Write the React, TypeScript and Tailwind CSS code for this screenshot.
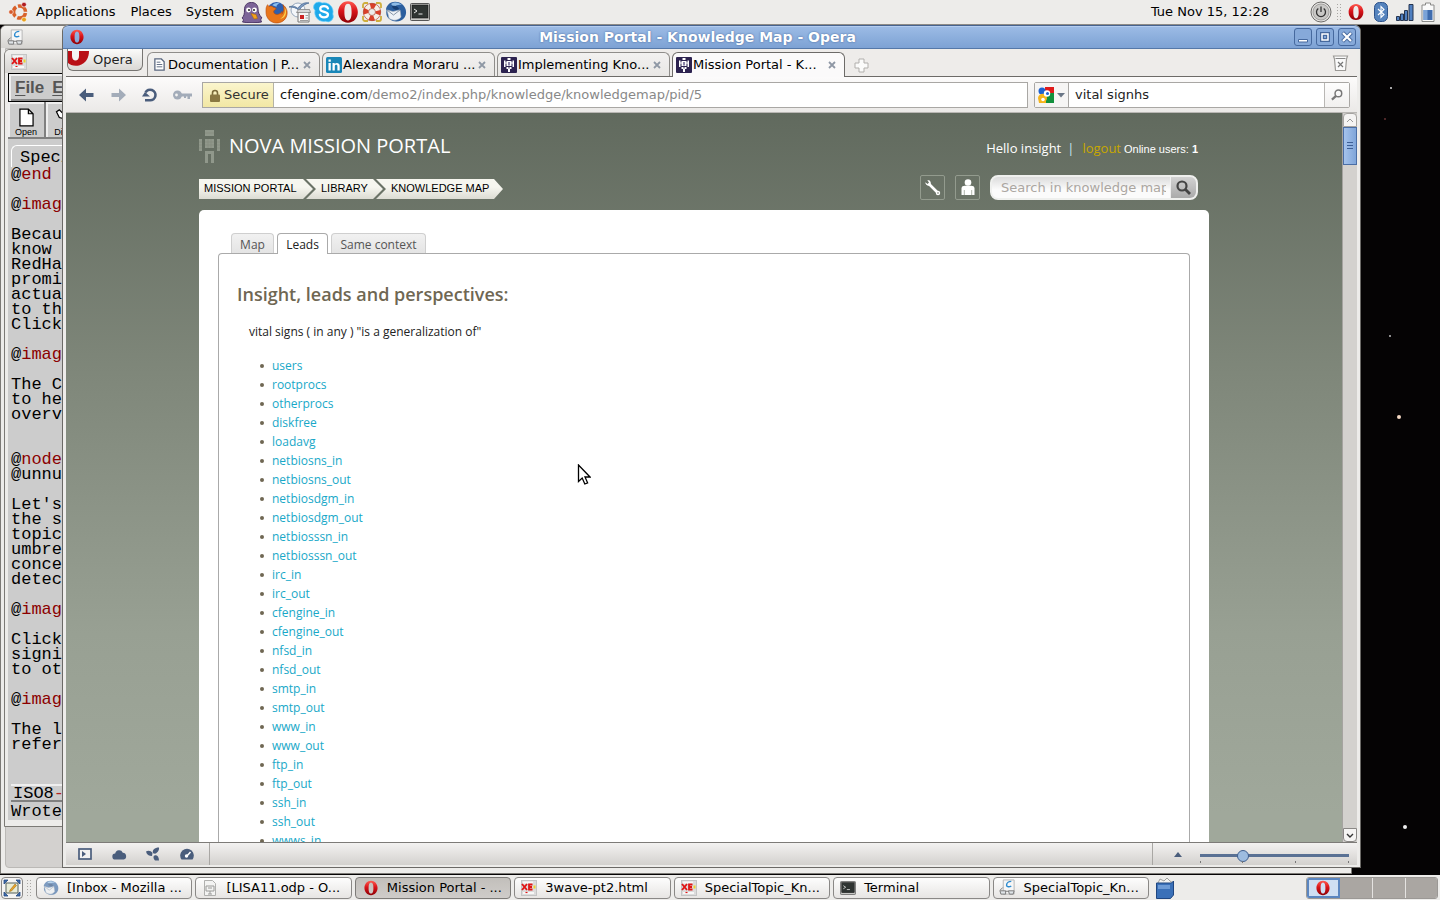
import React from "react";

type IconProps = { className?: string };

function OperaO({ className = "size-5" }: IconProps) {
  return (
    <svg viewBox="0 0 20 20" className={className} aria-hidden="true">
      <defs>
        <linearGradient id="operaRed" x1="0" y1="0" x2="0" y2="1">
          <stop offset="0" stopColor="#ff5a50" />
          <stop offset="0.45" stopColor="#d8141a" />
          <stop offset="1" stopColor="#8e0005" />
        </linearGradient>
      </defs>
      <path
        fillRule="evenodd"
        fill="url(#operaRed)"
        d="M10 1C5.300 1 1.800 5 1.800 10.100S5.300 19 10 19s8.200-3.800 8.200-8.900S14.700 1 10 1zm0 2.200c2.300 0 3 2.800 3 6.800S12.300 17 10 17s-3-3-3-7S7.700 3.200 10 3.200z"
      />
    </svg>
  );
}

function Ubuntu() {
  return (
    <svg viewBox="0 0 22 22" className="size-[22px]" aria-hidden="true">
      <circle cx="11.500" cy="11" r="6" fill="none" stroke="#d8612a" strokeWidth="3.600" strokeDasharray="10.500 2" strokeDashoffset="-1" />
      <circle cx="3" cy="11" r="2.300" fill="#d5592b" stroke="#fff" strokeWidth=".6" />
      <circle cx="16" cy="3.600" r="2.400" fill="#b01d22" stroke="#fff" strokeWidth=".6" />
      <circle cx="16" cy="18.600" r="2.400" fill="#e9a21d" stroke="#fff" strokeWidth=".6" />
    </svg>
  );
}

function Pidgin() {
  return (
    <svg viewBox="0 0 22 22" className="size-[22px]" aria-hidden="true">
      <path d="M3.500 9C3.500 4 6 1.500 10.500 1.500c4 0 6.500 2.500 6.500 6.500 0 3 .8 5.500 4 9-1.500.3-1.500 1.500-.5 4-5 1-14 1-19 0 1.500-2 1-3-.5-4 2-2 2.500-4 2.500-8z" fill="#7c6498" stroke="#4b3565" strokeWidth="1" />
      <circle cx="7.500" cy="9" r="2.400" fill="#fff" />
      <circle cx="13.500" cy="9" r="2.400" fill="#fff" />
      <circle cx="8" cy="9" r="1" fill="#222" />
      <circle cx="13" cy="9" r="1" fill="#222" />
      <path d="M10 12.500l5 1 1.500 4-3.500.5z" fill="#f3a21c" stroke="#a76207" strokeWidth=".5" />
    </svg>
  );
}

function Firefox() {
  return (
    <svg viewBox="0 0 22 22" className="size-[23px]" aria-hidden="true">
      <circle cx="11" cy="10" r="9" fill="#2f5fae" />
      <path d="M7 4c2-2 5-2.500 7-1.500-2 .5-3 1.500-3 3z" fill="#8cc0f0" />
      <path d="M1 8c0-2 .8-3.500 1.500-4.500.3 1 .8 1.500 1.500 1.700C5.500 4.500 7 5 8 6c1.500.3 2.500.8 2.800 1.700-1.300.8-2.800 1.300-2.500 2.800.3 2 3 3 5 2 1.500-.7 2.500-1 3-2.500.5 1 0 2-.5 2.700C18.500 10 18.500 6 17 3.500 20.500 6 22 10 20.800 14 19.500 18.500 15.500 21 11 21 5 21 1 16 1 11z" fill="#e8761b" stroke="#b94a08" strokeWidth=".6" />
      <path d="M18.500 6c1.500 4 0 9-4 11 4-.2 6-4 5.500-7.500-.2-1.500-.8-2.700-1.500-3.500z" fill="#fbd14b" />
    </svg>
  );
}

function OfficeDoc() {
  return (
    <svg viewBox="0 0 22 22" className="size-[22px]" aria-hidden="true">
      <circle cx="9" cy="9" r="7" fill="#f3f6fa" stroke="#98a9bd" />
      <path d="M0 6c3-1.500 6-1 9 1.500C11 3.500 15 1 20 2c-4 1-7 3-10 7.500C7 6.500 4 6 0 6z" fill="#7f9cc2" stroke="#41628d" strokeWidth=".7" />
      <path d="M9 10.500h11V21H9z" fill="#f5f5f5" stroke="#777" />
      <path d="M7.500 11.500l2-3h11l1 3z" fill="#d7d7d7" stroke="#777" strokeWidth=".7" />
      <path d="M11 14h4v4h-4z" fill="#c22" />
      <path d="M16.500 14.500h2.500M16.500 17h2.500M11 19.500h8" stroke="#888" strokeWidth=".8" />
    </svg>
  );
}

function Skype() {
  return (
    <svg viewBox="0 0 22 22" className="size-[22px]" aria-hidden="true">
      <path d="M6 1a5 5 0 0 1 3 1 9 9 0 0 1 10.800 11A5.500 5.500 0 0 1 12.500 20.300 9 9 0 0 1 2 9.500 5 5 0 0 1 6 1z" fill="#1ea9ea" stroke="#6fd0fa" strokeWidth=".7" />
      <path d="M15 7.500C14.500 5.800 13 5.200 11 5.200c-2.200 0-3.800 1-3.800 2.800 0 3.800 7.800 2 7.800 5.500 0 1.900-1.800 2.800-4 2.800s-3.700-.8-4.200-2.600" fill="none" stroke="#fff" strokeWidth="2.200" strokeLinecap="round" />
    </svg>
  );
}

function Lifebuoy() {
  return (
    <svg viewBox="0 0 22 22" className="size-[22px]" aria-hidden="true">
      <path d="M7 2H4a2 2 0 0 0-2 2v3M15 2h3a2 2 0 0 1 2 2v3M7 20H4a2 2 0 0 1-2-2v-3M15 20h3a2 2 0 0 0 2-2v-3" fill="none" stroke="#cfae3c" strokeWidth="1.800" />
      <circle cx="11" cy="11" r="6.200" fill="none" stroke="#f5efe8" strokeWidth="5" />
      <circle cx="11" cy="11" r="6.200" fill="none" stroke="#d9402a" strokeWidth="5" strokeDasharray="4.870 4.870" strokeDashoffset="2.430" />
      <circle cx="11" cy="11" r="8.700" fill="none" stroke="#a8301a" strokeWidth=".6" />
      <circle cx="11" cy="11" r="3.500" fill="none" stroke="#a8301a" strokeWidth=".6" />
    </svg>
  );
}

function Thunderbird({ className = "size-[22px]" }: IconProps) {
  return (
    <svg viewBox="0 0 22 22" className={className} aria-hidden="true">
      <path d="M3 4c3-4 10-4 14-1 4 3 5.500 9 2.500 13.500C16.500 21 9 21.500 5 18.500 1 16 1 12 1.500 9.500 .5 8 1.500 5.500 3 4z" fill="#2c5f9e" />
      <path d="M6 3c4-2.500 8-1.500 11 1-3-.5-6 0-8 2z" fill="#8dbbe6" />
      <path d="M2 9l6 1.500 7-1.500 1 7c-3 4-9 4-12 1z" fill="#eef2f6" stroke="#a7b3c0" strokeWidth=".6" />
      <path d="M2 9l6.500 5L15 9" fill="none" stroke="#8796a8" />
      <path d="M7 5c3-1 6 0 7 3l-3 1c-2-1-4-2-4-4z" fill="#183f73" />
    </svg>
  );
}

function TerminalIcon({ className = "h-[18px] w-5" }: IconProps) {
  return (
    <svg viewBox="0 0 20 18" className={className} aria-hidden="true">
      <rect x=".5" y=".5" width="19" height="17" rx="1" fill="#c9c9c6" stroke="#555" />
      <rect x="2" y="2" width="16" height="13" fill="#2f3432" stroke="#111" strokeWidth=".6" />
      <path d="M4 6l3 2-3 2M8.500 11h4" fill="none" stroke="#e6e6e6" />
    </svg>
  );
}

function XeIcon() {
  return (
    <svg viewBox="0 0 16 16" className="size-4 shrink-0" aria-hidden="true">
      <rect x=".5" y=".5" width="15" height="15" fill="#dcdcdc" stroke="#c4c4c4" />
      <path d="M2 1.500h10v2H2zM2 12h11v2H2z" fill="#f7f7f7" />
      <path d="M1 4l5 6M6 4l-5 6" stroke="#e01515" strokeWidth="1.900" />
      <path d="M11.500 4.500H8v5h3.500M8 7h3" fill="none" stroke="#e01515" strokeWidth="1.800" />
      <path d="M12.500 5.500h2v3h-2z" fill="#ead32c" />
      <path d="M4.500 12.500h2" stroke="#e01515" strokeWidth="1.200" />
    </svg>
  );
}

function GlassesDoc() {
  return (
    <svg viewBox="0 0 18 18" className="size-[17px] shrink-0" aria-hidden="true">
      <path d="M4.500 1H16v15H4.500z" fill="#f6f6f6" stroke="#b5b5b5" />
      <path d="M13 2.500c-3 0-5 2-5 4s3 2 5 1" fill="none" stroke="#2c8bd0" strokeWidth="1.500" />
      <path d="M1 12.500h6v3.500H2zM10 12.500h6l-1 3.500h-4zM7 13h3M1 12l3-3" fill="#dfe4e8" stroke="#777" />
    </svg>
  );
}

function SlidesDoc() {
  return (
    <svg viewBox="0 0 16 16" className="size-4 shrink-0" aria-hidden="true">
      <path d="M2.500.5h8l3 3v12h-11z" fill="#f3f3f2" stroke="#b0b0ae" />
      <path d="M4 6h8v5H4zM6 8h4M8 11v3M6 14h4" fill="none" stroke="#9a9a98" />
    </svg>
  );
}

function RobotFav() {
  return (
    <svg viewBox="0 0 16 16" className="size-4 shrink-0" aria-hidden="true">
      <rect width="16" height="16" rx="1" fill="#2d2350" />
      <path d="M6.500 1h3v2h-3zM5.500 4h5v5h-5zM3 3.500h1.500V10H3zM11.500 3.500H13V10h-1.500zM4 5.500h8v1H4zM5.500 10h2v2h-2zM8.500 10h2v2h-2zM7 11.500h2V15H7z" fill="#fff" />
      <path d="M7 5h2v3.500H7z" fill="#8b84a8" />
    </svg>
  );
}

function LinkedInFav() {
  return (
    <svg viewBox="0 0 16 16" className="size-4 shrink-0" aria-hidden="true">
      <rect width="16" height="16" rx="1.500" fill="#1a87b8" />
      <path d="M2.500 6h2.300v7.500H2.500zM2.500 2.500h2.300v2.200H2.500zM6.500 6h2.200v1c1.200-1.800 5-1.500 5 1.800v4.700h-2.300V9.300c0-2-2.600-1.800-2.600 0v4.200H6.500z" fill="#fff" />
    </svg>
  );
}

function PageFav() {
  return (
    <svg viewBox="0 0 14 14" className="size-[13px] shrink-0" aria-hidden="true">
      <path d="M2 1h7l3 3v9H2z" fill="#fff" stroke="#5b6880" strokeWidth="1.400" />
      <path d="M4 4.500h4M4 7h6M4 9.500h6" stroke="#5b6880" />
    </svg>
  );
}

function Grip() {
  return (
    <span className="grid grid-cols-2 gap-x-[2px] gap-y-[2px]" aria-hidden="true">
      {Array.from({ length: 12 }, (_, i) => (
        <span key={i} className="size-px bg-[#a9a7a4]" />
      ))}
    </span>
  );
}

const launchers: { name: string; icon: React.ReactNode }[] = [
  { name: "Pidgin", icon: <Pidgin /> },
  { name: "Firefox", icon: <Firefox /> },
  { name: "Evolution", icon: <OfficeDoc /> },
  { name: "Skype", icon: <Skype /> },
  { name: "Opera", icon: <OperaO className="size-6" /> },
  { name: "Help", icon: <Lifebuoy /> },
  { name: "Thunderbird", icon: <Thunderbird /> },
  { name: "Terminal", icon: <TerminalIcon /> },
];

function TopPanel() {
  return (
    <header className="flex h-[25px] shrink-0 items-center border-b border-[#8d8b87] bg-[#edecea] text-[13px] leading-4 text-black">
      <nav className="flex items-center pl-2" aria-label="System menu">
        <Ubuntu />
        <button className="ml-[6px]">Applications</button>
        <button className="ml-[15px]">Places</button>
        <button className="ml-[14px]">System</button>
      </nav>
      <div className="ml-[6px] flex items-center">
        {launchers.map((l) => (
          <button key={l.name} aria-label={l.name} className="flex w-6 items-center justify-center">
            {l.icon}
          </button>
        ))}
      </div>
      <div className="ml-auto flex items-center">
        <time className="mr-[41px]">Tue Nov 15, 12:28</time>
        <button aria-label="Power" className="mr-[5px]">
          <svg viewBox="0 0 22 22" className="size-[22px]">
            <circle cx="11" cy="11" r="10" fill="#e4e3e1" stroke="#6c6b69" />
            <circle cx="11" cy="11" r="8" fill="#c9c8c6" stroke="#a3a2a0" />
            <path d="M8.300 7.500a4.500 4.500 0 1 0 5.400 0M11 5.500V11" fill="none" stroke="#333" strokeWidth="1.300" />
          </svg>
        </button>
        <Grip />
        <button aria-label="Opera tray" className="ml-[6px]">
          <OperaO className="size-[18px]" />
        </button>
        <button aria-label="Bluetooth" className="ml-2">
          <svg viewBox="0 0 16 20" className="h-5 w-4">
            <rect x="1.500" y=".5" width="13" height="19" rx="5" fill="#5583bd" stroke="#2d528a" />
            <path d="M5 7l6 5.500L8 15.500v-11l3 3L5 13" fill="none" stroke="#fff" strokeWidth="1.100" />
          </svg>
        </button>
        <button aria-label="Network" className="ml-[7px]">
          <svg viewBox="0 0 18 18" className="size-[18px]">
            <path d="M.5 13.500h3v4h-3zM4.500 11h3v6.500h-3zM8.500 7.500h3v10h-3zM13 1.500h4v16h-4z" fill="#4f7fc0" stroke="#26354f" />
          </svg>
        </button>
        <button aria-label="Battery" className="mr-[5px] ml-[7px]">
          <svg viewBox="0 0 14 20" className="h-5 w-[14px]">
            <path d="M4.500 1h5v2h3.500v16.500H1V3h3.500z" fill="#fafafa" stroke="#8a8a88" />
            <path d="M2.500 8h9v10h-9z" fill="#3f6cae" />
            <path d="M2.500 8h4v10h-4z" fill="#7ba3d8" />
          </svg>
        </button>
      </div>
    </header>
  );
}

const emacsText: { at?: boolean; text: string }[] = [
  { at: true, text: "end" }, { text: "" },
  { at: true, text: "image" }, { text: "" },
  { text: "Becaus" }, { text: "know t" }, { text: "RedHat" }, { text: "promis" }, { text: "actual" }, { text: "to the" }, { text: "Click " }, { text: "" },
  { at: true, text: "image" }, { text: "" },
  { text: "The CF" }, { text: "to hel" }, { text: "overvi" }, { text: "" }, { text: "" },
  { at: true, text: "node" }, { text: "@unnum" }, { text: "" },
  { text: "Let's " }, { text: "the sy" }, { text: "topics" }, { text: "umbrel" }, { text: "concep" }, { text: "detect" }, { text: "" },
  { at: true, text: "image" }, { text: "" },
  { text: "Clicki" }, { text: "signif" }, { text: "to oth" }, { text: "" },
  { at: true, text: "image" }, { text: "" },
  { text: "The le" }, { text: "refere" },
];

function EmacsWindow() {
  return (
    <section aria-label="Editor" className="absolute top-[24px] bottom-12 left-1 w-[200px] overflow-hidden rounded-tl-md border border-[#7c7a76] bg-[#edecea]">
      <div className="flex h-[23px] items-center bg-[linear-gradient(#f2f1ef,#d6d4d1)] pl-[6px]">
        <XeIcon />
      </div>
      <div className="mr-1 ml-[3px] bg-[#cccccc]">
        <div className="flex h-[29px] items-center gap-2 border border-black bg-[#cccccc] pt-px pl-[6px] font-['Liberation_Sans'] text-[17px] leading-5 font-bold text-[#555] shadow-[inset_2px_2px_0_#eee,inset_-1px_-2px_0_#888]">
          <button><span className="underline underline-offset-2">F</span>ile</button>
          <button><span className="underline underline-offset-2">E</span>dit</button>
        </div>
        <div className="flex h-[37px] border-b-2 border-[#808080]">
          <button className="flex w-[38px] flex-col items-center justify-end border-r-2 border-[#808080] font-['Liberation_Sans'] text-[9px] leading-[10px] text-black shadow-[inset_2px_2px_0_#eee]">
            <svg viewBox="0 0 16 20" className="h-[19px] w-[15px]" aria-hidden="true">
              <path d="M1 1h9l5 5v13H1zM10 1v5h5" fill="#fff" stroke="#000" strokeWidth="1.300" />
            </svg>
            Open
          </button>
          <button className="flex w-[38px] flex-col items-center justify-end font-['Liberation_Sans'] text-[9px] leading-[10px] text-black shadow-[inset_2px_2px_0_#eee]">
            <svg viewBox="0 0 22 20" className="h-[19px] w-[22px]" aria-hidden="true">
              <path d="M2 4l3-2 3 3 3-3h9l-5 15h-4l-2-6-4-1z" fill="#fff" stroke="#000" strokeWidth="1.300" />
            </svg>
            Dired
          </button>
        </div>
        <div className="px-[3px] pt-[6px] font-['Liberation_Mono',monospace] text-[17px] leading-[15px] whitespace-pre text-black">
          <div className="h-[22px] rounded-tl-md border-t border-l border-white pt-[4px] pl-[8px]">Special</div>
          {emacsText.map((l, i) => (
            <div key={i} className="h-[15px]">
              {l.at && "@"}
              <span className={l.at ? "text-[#8b0000]" : ""}>{l.text}</span>
            </div>
          ))}
          <div className="mt-[32px] flex h-[18px] items-center border-t-2 border-b-2 border-t-[#eee] border-b-[#808080] pl-[2px]">
            ISO8<span className="text-[#b22222]">--</span>
          </div>
          <div className="h-[18px] pt-[2px]">Wrote </div>
        </div>
      </div>
    </section>
  );
}

const tabs = [
  { title: "Documentation | P...", icon: <PageFav /> },
  { title: "Alexandra Moraru ...", icon: <LinkedInFav /> },
  { title: "Implementing Kno...", icon: <RobotFav /> },
  { title: "Mission Portal - K...", icon: <RobotFav />, active: true },
];

function TitleBar() {
  return (
    <div className="flex h-6 shrink-0 items-center rounded-t-md border-t border-b border-t-[#46638f] border-b-[#5578a8] bg-[linear-gradient(#9dbce6,#7da2d4)] pr-1 pl-[6px] shadow-[inset_0_1px_0_#b4cdf0]">
      <OperaO className="size-4" />
      <h1 className="flex-1 pl-4 text-center text-[14px] leading-4 font-bold text-white [text-shadow:0_0_2px_#3f5f94]">
        Mission Portal - Knowledge Map - Opera
      </h1>
      <div className="flex gap-1">
        <button aria-label="Minimize" className="rounded-[3px] border border-[#46699e] bg-[#86a9d9]">
          <svg viewBox="0 0 16 16" className="size-4"><path d="M3.500 10.500h9v2.500h-9z" fill="#fff" stroke="#46699e" /></svg>
        </button>
        <button aria-label="Maximize" className="rounded-[3px] border border-[#46699e] bg-[#86a9d9]">
          <svg viewBox="0 0 16 16" className="size-4"><path d="M5 5h6v6H5z" fill="none" stroke="#46699e" strokeWidth="4" /><path d="M5 5h6v6H5z" fill="none" stroke="#fff" strokeWidth="1.500" /></svg>
        </button>
        <button aria-label="Close" className="rounded-[3px] border border-[#46699e] bg-[#86a9d9]">
          <svg viewBox="0 0 16 16" className="size-4"><path d="M5 5l6 6M11 5l-6 6" stroke="#46699e" strokeWidth="4" strokeLinecap="square" /><path d="M4 4l8 8M12 4l-8 8" stroke="#fff" strokeWidth="2.200" /></svg>
        </button>
      </div>
    </div>
  );
}

function TabBar() {
  return (
    <div className="flex h-7 shrink-0 items-start bg-[#eeecea] text-[13px] leading-4 shadow-[inset_0_-1px_0_#6d6b68]">
      <button className="ml-px flex h-[22px] w-[76px] items-start gap-1 rounded-b-md border border-t-0 border-[#777572] bg-[linear-gradient(#fbfbfa,#dad8d5)] pt-[2px] text-[#222]">
        <svg viewBox="0 0 21 15" className="h-[15px] w-[21px]" aria-hidden="true">
          <path d="M0 0h21c0 7-3 12-10 14.500C6 15.500 2 14 0 12z" fill="#b90f16" />
          <path d="M4 0h7v5c0 6-7 6-7 0z" fill="#f4f3f2" />
        </svg>
        <span className="pt-px">Opera</span>
      </button>
      <div role="tablist" className="ml-1 flex gap-[2px] pt-[3px]">
        {tabs.map((t) => (
          <div
            key={t.title}
            className={
              t.active
                ? "flex h-[25px] w-[173px] items-center rounded-t-md border border-b-0 border-[#6d6b68] bg-[#fbfafa] pr-2 pl-[3px]"
                : "mb-px flex h-6 w-[173px] items-center rounded-t-md border border-b-0 border-[#8f8d8a] bg-[linear-gradient(#f2f1f0,#e9e7e5)] pr-2 pl-[3px]"
            }
          >
            <button role="tab" aria-selected={!!t.active} className="flex min-w-0 flex-1 items-center gap-px whitespace-nowrap text-black">
              <span className="flex w-4 justify-center">{t.icon}</span>
              {t.title}
            </button>
            <button aria-label={"Close " + t.title}>
              <svg viewBox="0 0 8 8" className="size-2"><path d="M1 1l6 6M7 1L1 7" stroke="#8f98a5" strokeWidth="1.800" /></svg>
            </button>
          </div>
        ))}
      </div>
      <button aria-label="New tab" className="mt-[9px] ml-[9px]">
        <svg viewBox="0 0 15 15" className="size-[15px]"><path d="M5 1h5v4h4v5h-4v4H5v-4H1V5h4z" fill="#fbfbfa" stroke="#b1afac" /></svg>
      </button>
      <button aria-label="Closed tabs" className="mt-[6px] mr-2 ml-auto">
        <svg viewBox="0 0 17 17" className="size-[17px]">
          <path d="M1.500 1h14l-1 3-1 11.500h-10L2.500 4z" fill="#fafafa" stroke="#9b9996" strokeWidth="1.200" />
          <path d="M3.500 3.500h10" stroke="#888" />
          <path d="M6 7l5 5M11 7l-5 5" stroke="#777" strokeWidth="1.200" />
        </svg>
      </button>
    </div>
  );
}

function AddressBar() {
  return (
    <div className="flex h-9 shrink-0 items-center border-b border-[#b9b7b4] bg-[linear-gradient(#fcfbfb,#ebe9e7)] pt-px pr-[7px] text-[13px] leading-4">
      <button aria-label="Back" className="ml-[13px]">
        <svg viewBox="0 0 15 14" className="h-[14px] w-[15px]"><path d="M0 7l7-6.500V5h7.500v4H7v4.500z" fill="#4a5d7c" /></svg>
      </button>
      <button aria-label="Forward" className="ml-[17px]">
        <svg viewBox="0 0 15 14" className="h-[14px] w-[15px]"><path d="M15 7L8 .5V5H.5v4H8v4.500z" fill="#a3acb9" /></svg>
      </button>
      <button aria-label="Reload" className="ml-4">
        <svg viewBox="0 0 16 16" className="size-4"><path d="M3.500 5.500A5.300 5.300 0 1 1 8 13.300H3" fill="none" stroke="#4a5d7c" strokeWidth="2.600" /><path d="M0 9.500l3-4.500 5 4.500z" fill="#4a5d7c" /></svg>
      </button>
      <button aria-label="Password manager" className="ml-[15px]">
        <svg viewBox="0 0 19 10" className="h-[10px] w-[19px]"><circle cx="4.500" cy="5" r="4.500" fill="#a3acb9" /><circle cx="3.500" cy="5" r="1.400" fill="#f4f3f2" /><path d="M8 3.500h11v3h-2V9h-2.500V6.500H13V8h-2V6.500H8z" fill="#a3acb9" /></svg>
      </button>
      <div className="ml-[10px] flex h-[26px] flex-1 items-stretch border border-[#a9a7a4] bg-white">
        <button className="flex w-[71px] items-center gap-1 border-r border-[#b5b3a5] bg-[linear-gradient(#fbf5cd,#f2e7a4)] pl-[7px] text-[#333]">
          <svg viewBox="0 0 10 13" className="h-[13px] w-[10px]" aria-hidden="true"><path d="M2.500 6V4a2.500 2.500 0 0 1 5 0v2" fill="none" stroke="#7a6a3a" strokeWidth="1.600" /><rect y="5.500" width="10" height="7.500" rx="1" fill="#8a7842" /></svg>
          Secure
        </button>
        <a href="#address" className="flex items-center pl-[6px] text-[#888]">
          <span><span className="text-[#111]">cfengine.com</span>/demo2/index.php/knowledge/knowledgemap/pid/5</span>
        </a>
      </div>
      <div className="ml-[6px] flex h-[26px] w-[316px] items-stretch rounded-[2px] border border-[#a9a7a4] bg-white">
        <button aria-label="Search engine" className="flex w-[34px] items-center gap-[3px] border-r border-[#a9a7a4] bg-[#f6f5f4] pl-[3px]">
          <svg viewBox="0 0 16 16" className="size-4"><path d="M0 0h7v16H0z" fill="#f5f5f5" /><path d="M7 0h9v6H7z" fill="#e01b1b" /><path d="M9 6h7v10H7z" fill="#12903c" /><circle cx="4" cy="4" r="3.500" fill="#1f62d0" /><path d="M0 11a4.500 4.500 0 1 1 8 3v2H1z" fill="#f6b51c" /><circle cx="9" cy="6.500" r="3.200" fill="#fff" /><circle cx="9.500" cy="6.500" r="1.500" fill="#1f62d0" /><circle cx="5" cy="12.500" r="1.800" fill="#fff" /></svg>
          <svg viewBox="0 0 8 5" className="h-[5px] w-2"><path d="M0 0h8L4 4.500z" fill="#6a7686" /></svg>
        </button>
        <input aria-label="Web search" defaultValue="vital signhs" className="min-w-0 flex-1 px-[6px] text-[#222] outline-none" />
        <button aria-label="Search" className="flex w-[25px] items-center justify-center border-l border-[#b9b7b4] bg-[linear-gradient(#fdfdfd,#f1f0ef)]">
          <svg viewBox="0 0 13 13" className="size-[12px]"><circle cx="8" cy="4.800" r="3.600" fill="none" stroke="#777" strokeWidth="1.600" /><path d="M5.500 7.500L1 11.500" stroke="#777" strokeWidth="2.400" /></svg>
        </button>
      </div>
    </div>
  );
}

const leads = [
  "users", "rootprocs", "otherprocs", "diskfree", "loadavg", "netbiosns_in", "netbiosns_out", "netbiosdgm_in", "netbiosdgm_out",
  "netbiosssn_in", "netbiosssn_out", "irc_in", "irc_out", "cfengine_in", "cfengine_out", "nfsd_in", "nfsd_out", "smtp_in", "smtp_out",
  "www_in", "www_out", "ftp_in", "ftp_out", "ssh_in", "ssh_out", "wwws_in",
];

function Portal() {
  return (
    <main className="min-w-0 flex-1 overflow-hidden bg-[linear-gradient(#616a5e,#7f877a_260px,#98a093_520px,#a0a89b_700px)] font-['Open_Sans',sans-serif]">
      <div className="mx-auto max-w-[1010px]">
        <div className="flex h-[66px] items-center justify-between pr-[11px]">
          <div className="flex items-center gap-[9px]">
            <svg viewBox="0 0 21 33" className="h-[33px] w-[21px]" aria-hidden="true">
              <path d="M6 0h9v6H6zM6 9h9v9H6zM0 9h3v12H0zM18 9h3v12h-3zM6 21h9v12h-3v-9H9v9H6z" fill="#90988b" />
              <path d="M6 3h9M6 12h9M6 15h9M0 12h3M0 15h3M0 18h3M18 12h3M18 15h3M18 18h3M9 9v9M12 9v9" stroke="#838b7e" strokeWidth=".6" />
            </svg>
            <h2 className="text-[20px] leading-7 text-white">NOVA MISSION PORTAL</h2>
          </div>
          <p className="flex items-baseline pt-[5px] text-[13px] leading-5 text-white">
            Hello insight<span className="mr-2 ml-[6px] text-[#c9e4f4]">|</span>
            <a href="#logout" className="text-[#c8a800]">logout</a>
            <span className="ml-[3px] font-['Liberation_Sans'] text-[11px]">Online users: <b>1</b></span>
          </p>
        </div>
        <div className="flex h-[31px] items-start">
          <nav aria-label="Breadcrumb" className="flex font-['Liberation_Sans'] text-[11px] leading-[18px] text-black">
            <a href="#portal" className="h-5 w-[115px] bg-[linear-gradient(#f6f6ef_40%,#dcdcd3)] pl-[5px] [clip-path:polygon(0_0,104px_0,114px_50%,104px_100%,0_100%)]">MISSION PORTAL</a>
            <a href="#library" className="-ml-2 h-5 w-[78px] bg-[linear-gradient(#f6f6ef_40%,#dcdcd3)] pl-[15px] [clip-path:polygon(0_0,67px_0,77px_50%,67px_100%,0_100%,10px_50%)]">LIBRARY</a>
            <a href="#map" className="-ml-2 h-5 w-[127px] bg-[linear-gradient(#f6f6ef_40%,#dcdcd3)] pl-[15px] [clip-path:polygon(0_0,118px_0,100%_50%,118px_100%,0_100%,10px_50%)]">KNOWLEDGE MAP</a>
          </nav>
          <div className="-mt-1 mr-[11px] ml-auto flex items-center">
            <button aria-label="Tools" className="mr-[10px] flex size-[25px] items-center justify-center rounded-[2px] border border-[#939b8e]">
              <svg viewBox="0 0 17 17" className="size-[17px]"><path d="M5 5l9 9" stroke="#fff" strokeWidth="2.600" /><path d="M1.300 3.200L3.600 5 5 3.600 3.300 1.300C6 .7 7.500 3 6.500 6 5 7.500 1.300 6.500 1.300 3.200z" fill="#fff" /><circle cx="14" cy="14" r="2.200" fill="#fff" /><circle cx="14" cy="14" r=".8" fill="#6b7367" /></svg>
            </button>
            <button aria-label="Account" className="mr-[10px] flex size-[25px] items-center justify-center rounded-[2px] border border-[#939b8e]">
              <svg viewBox="0 0 14 17" className="h-[17px] w-[14px]"><circle cx="7" cy="3.500" r="3.300" fill="#fff" /><path d="M.5 16V9.500C.5 7.500 2 6.800 4 6.800h6c2 0 3.500.7 3.500 2.700V16z" fill="#fff" /><path d="M3.300 11v5M10.700 11v5" stroke="#9aa296" strokeWidth=".8" /></svg>
            </button>
            <div className="flex h-[25px] w-[208px] overflow-hidden rounded-lg border-2 border-[#eff0ee] bg-[linear-gradient(#dcdcdc,#fbfbfb_60%)]">
              <input aria-label="Search in knowledge map" placeholder="Search in knowledge map" className="min-w-0 flex-1 bg-transparent pr-1 pl-[9px] font-['DejaVu_Sans'] text-[13px] outline-none placeholder:text-[#aba6a1]" />
              <button aria-label="Search map" className="flex w-[26px] items-center justify-center border-l border-[#eee] bg-[linear-gradient(#d2d2d2,#aaa)]">
                <svg viewBox="0 0 15 15" className="size-[15px]"><circle cx="6" cy="6" r="4.500" fill="none" stroke="#444" strokeWidth="2.200" /><path d="M9.500 9.500L14 14" stroke="#444" strokeWidth="2.800" /></svg>
              </button>
            </div>
          </div>
        </div>
        <div className="rounded-t-[5px] bg-white px-[19px] pt-[23px]">
          <div role="tablist" className="relative ml-[13px] flex items-end gap-[3px] text-[12px] leading-[19px]">
            <button role="tab" aria-selected="false" className="h-5 w-[43px] rounded-t border border-b-0 border-[#cfcfcf] bg-[linear-gradient(#f1f1f1,#e4e4e4)] pt-px text-[#555]">Map</button>
            <button role="tab" aria-selected="true" className="-mb-px h-[21px] w-[51px] rounded-t border border-b-0 border-[#aaa] bg-white text-[#222]">Leads</button>
            <button role="tab" aria-selected="false" className="h-5 w-[95px] rounded-t border border-b-0 border-[#cfcfcf] bg-[linear-gradient(#f1f1f1,#e4e4e4)] pt-px text-[#555]">Same context</button>
          </div>
          <div className="rounded-t border border-b-0 border-[#aaa] px-[18px] pt-[28px]">
            <h3 className="text-[18px] leading-6 font-semibold text-[#6f6753]">Insight, leads and perspectives:</h3>
            <p className="mt-4 pl-3 text-[12px] leading-5 text-[#222]">vital signs ( in any ) "is a generalization of"</p>
            <ul className="mt-[14px] pb-10 pl-[23px] text-[12px] leading-[19px]">
              {leads.map((l) => (
                <li key={l} className="flex items-center">
                  <span className="mt-px mr-2 size-1 rounded-full bg-[#6f6753]" />
                  <a href={"#" + l} className="text-[#18a8c8]">{l}</a>
                </li>
              ))}
            </ul>
          </div>
        </div>
      </div>
    </main>
  );
}

function Scrollbar() {
  return (
    <div className="flex w-[15px] shrink-0 flex-col border-l border-[#a5a3a0] bg-[#d3d1ce]">
      <button aria-label="Scroll up" className="flex h-[14px] items-center justify-center rounded-t border border-[#a5a3a0] bg-[#f5f4f3]">
        <svg viewBox="0 0 8 5" className="h-[5px] w-2"><path d="M1 4l3-3 3 3" fill="none" stroke="#999" /></svg>
      </button>
      <div className="flex h-[38px] items-center justify-center border border-[#4a6ea5] bg-[linear-gradient(90deg,#a5c3ec,#7fa5d9)]">
        <svg viewBox="0 0 6 8" className="h-2 w-[6px]" aria-hidden="true"><path d="M0 .5h6M0 3.500h6M0 6.500h6" stroke="#3d5f95" /></svg>
      </div>
      <button aria-label="Scroll down" className="mt-auto flex h-[14px] items-center justify-center rounded-b border border-[#8a8886] bg-[#f5f4f3]">
        <svg viewBox="0 0 8 5" className="h-[5px] w-2"><path d="M1 1l3 3 3-3" fill="none" stroke="#333" strokeWidth="1.400" /></svg>
      </button>
    </div>
  );
}

function StatusBar() {
  return (
    <footer className="flex h-[23px] shrink-0 items-center border-t border-[#7d7b78] bg-[linear-gradient(#f3f2f1,#d3d1ce)] pl-3">
      <button aria-label="Panels">
        <svg viewBox="0 0 14 12" className="h-3 w-[14px]"><rect x="1" y="1" width="12" height="10" fill="#f2f1f0" stroke="#4a5d7c" strokeWidth="1.700" /><path d="M4 3l4 3-4 3z" fill="#4a5d7c" /></svg>
      </button>
      <button aria-label="Opera Link" className="ml-5">
        <svg viewBox="0 0 15 11" className="h-[11px] w-[15px]"><path d="M3.500 10.500a3 3 0 0 1-.3-6A4 4 0 0 1 10.800 3.700a3.500 3.500 0 0 1 1 6.800z" fill="#4a5d7c" /></svg>
      </button>
      <button aria-label="Opera Unite" className="ml-[19px]">
        <svg viewBox="0 0 14 14" className="size-[14px]"><path d="M0 4.500c2-1.500 5-1 6.500 1.500L6 9C3 9 .5 7.500 0 4.500zM7 6C6 3 8.500.5 13 .5c.5 3-2 6-5 6.500zM8 8.500c2.500-1 5 .5 5 5H9C7.500 12 7 10 8 8.500z" fill="#4a5d7c" /><circle cx="8" cy="7.500" r="1" fill="#ecebe9" /></svg>
      </button>
      <button aria-label="Opera Turbo" className="ml-5">
        <svg viewBox="0 0 14 12" className="h-3 w-[14px]"><path d="M1.500 11.500A6.800 6.800 0 1 1 12.500 11.500z" fill="#4a5d7c" /><path d="M6.500 8.500l4-4.500" stroke="#fff" strokeWidth="1.500" /><circle cx="6.500" cy="8" r="1.700" fill="#fff" /></svg>
      </button>
      <span className="ml-[15px] h-full w-px bg-[#a9a7a4]" />
      <span className="ml-auto h-full w-px bg-[#a9a7a4]" />
      <button aria-label="Zoom menu" className="ml-[21px]">
        <svg viewBox="0 0 8 5" className="h-[5px] w-2"><path d="M0 5h8L4 0z" fill="#4a5d7c" /></svg>
      </button>
      <div className="mr-2 ml-[18px] w-[149px] pt-1">
        <input
          type="range"
          aria-label="Zoom"
          min={0}
          max={100}
          defaultValue={27}
          className="block h-3 w-full appearance-none bg-[linear-gradient(#5a7194,#5a7194)] bg-size-[100%_3px] bg-center bg-no-repeat [&::-webkit-slider-thumb]:size-3 [&::-webkit-slider-thumb]:appearance-none [&::-webkit-slider-thumb]:rounded-full [&::-webkit-slider-thumb]:border [&::-webkit-slider-thumb]:border-[#3f5f8f] [&::-webkit-slider-thumb]:bg-[#9dbce0]"
        />
        <div className="-mt-px flex h-[2px]" aria-hidden="true">
          <span className="w-[42px] border-l border-[#777]" />
          <span className="w-[53px] border-l border-[#777]" />
          <span className="flex-1 border-x border-[#777]" />
        </div>
      </div>
    </footer>
  );
}

function OperaWindow() {
  return (
    <section aria-label="Opera" className="absolute top-0 right-[79px] bottom-[7px] left-[62px] flex flex-col overflow-hidden rounded-t-md border-r border-b border-l border-[#6b6966] bg-[#edecea]">
      <TitleBar />
      <div className="mx-[3px] mb-[2px] flex min-h-0 flex-1 flex-col">
        <TabBar />
        <AddressBar />
        <div className="flex min-h-0 flex-1">
          <Portal />
          <Scrollbar />
        </div>
        <StatusBar />
      </div>
    </section>
  );
}

const tasks = [
  { title: "[Inbox - Mozilla ...", icon: <Thunderbird className="size-4 opacity-60" /> },
  { title: "[LISA11.odp - O...", icon: <SlidesDoc /> },
  { title: "Mission Portal - ...", icon: <OperaO className="size-4" />, active: true },
  { title: "3wave-pt2.html", icon: <XeIcon /> },
  { title: "SpecialTopic_Kn...", icon: <XeIcon /> },
  { title: "Terminal", icon: <TerminalIcon className="h-[14px] w-4" /> },
  { title: "SpecialTopic_Kn...", icon: <GlassesDoc /> },
];

function BottomPanel() {
  return (
    <footer className="flex h-[25px] shrink-0 items-center bg-[#edecea] pr-[2px] pl-px text-[13px] leading-4 text-black">
      <button aria-label="Show desktop" className="flex size-[22px] items-center justify-center rounded border border-[#8a8886] bg-[#f5f4f3]">
        <svg viewBox="0 0 18 18" className="size-[18px]"><path d="M3 4h12v10H3z" fill="#e9ecd8" stroke="#54615c" /><path d="M1 1h4L1 5zM17 1h-4l4 4zM1 17h4l-4-4zM17 17h-4l4-4z" fill="#3f6cae" stroke="#244a80" strokeWidth=".8" /><path d="M7 11l5-6 1.500 1.500-5 5.500-2 .5z" fill="#eaa62a" stroke="#8a5a10" strokeWidth=".5" /></svg>
      </button>
      <span className="mx-1"><Grip /></span>
      <div className="grid w-[1114px] grid-cols-7 gap-[3px] pl-px">
        {tasks.map((t, i) => (
          <button
            key={i}
            className={
              t.active
                ? "flex h-[22px] items-center rounded border border-[#7d7b78] bg-[linear-gradient(#c2bfbb,#cfccc9)] pl-[7px] whitespace-nowrap"
                : "flex h-[22px] items-center rounded border border-[#8a8886] bg-[linear-gradient(#fdfdfd,#e7e5e3)] pl-[6px] whitespace-nowrap"
            }
          >
            <span className="mr-2 flex w-4 justify-center">{t.icon}</span>
            {t.title}
          </button>
        ))}
      </div>
      <button aria-label="Trash" className="ml-[6px]">
        <svg viewBox="0 0 20 22" className="h-[22px] w-5"><path d="M3 6l2-4 4 2 3-3 3 3 3 2-1 3H3z" fill="#f3f3f1" stroke="#8b8b88" strokeWidth=".8" /><path d="M1.500 6h15l2-2v14l-3 3.500h-14z" fill="#3a70b8" stroke="#1f4680" /><path d="M3 8h12v4H3z" fill="#6d9bd6" /></svg>
      </button>
      <div className="ml-auto grid h-[22px] w-[132px] grid-cols-4 overflow-hidden rounded-[3px] border border-[#9b9895]">
        <button aria-label="Workspace 1" className="flex items-center justify-center border-2 border-[#5b86c0] bg-[#cfdff3]"><OperaO className="size-4" /></button>
        <button aria-label="Workspace 2" className="bg-[#aaa6a2]" />
        <button aria-label="Workspace 3" className="border-l border-[#e5e3e1] bg-[#aaa6a2]" />
        <button aria-label="Workspace 4" className="border-l border-[#e5e3e1] bg-[#aaa6a2]" />
      </div>
    </footer>
  );
}

export default function App() {
  return (
    <div className="flex h-screen min-h-0 flex-col overflow-hidden bg-[#050304] font-['DejaVu_Sans',sans-serif]">
      <TopPanel />
      <div className="relative min-h-0 flex-1 overflow-hidden">
        <span className="absolute top-[62px] right-12 size-[2px] rounded-full bg-[#ddd]" />
        <span className="absolute top-[310px] right-[49px] size-[2px] rounded-full bg-[#bbb]" />
        <span className="absolute top-[390px] right-[39px] size-1 rounded-full bg-[#f5d9c4]" />
        <span className="absolute top-[800px] right-[33px] size-1 rounded-full bg-[#eee]" />
        <span className="absolute top-[93px] right-[54px] size-[2px] rounded-full bg-[#633]" />
        <section aria-label="Document" className="absolute top-0 right-[88px] bottom-px left-0 overflow-hidden rounded-tl-md border border-[#7c7a76] bg-[#edecea]">
          <div className="flex h-[22px] items-center bg-[linear-gradient(#f2f1ef,#d6d4d1)] pl-[6px]">
            <GlassesDoc />
          </div>
          <div className="mx-1 h-[820px] rounded-b border border-[#bbb9b6] bg-[#d3d1cf]" />
        </section>
        <EmacsWindow />
        <OperaWindow />
        <svg viewBox="0 0 14 22" className="absolute top-[439px] left-[577px] h-[22px] w-[14px]" aria-hidden="true">
          <path d="M1.500 1v16.500l3.700-3.500 2.600 6 2.800-1.200L8 13h5z" fill="#fff" stroke="#000" strokeWidth="1.300" />
        </svg>
      </div>
      <BottomPanel />
    </div>
  );
}
